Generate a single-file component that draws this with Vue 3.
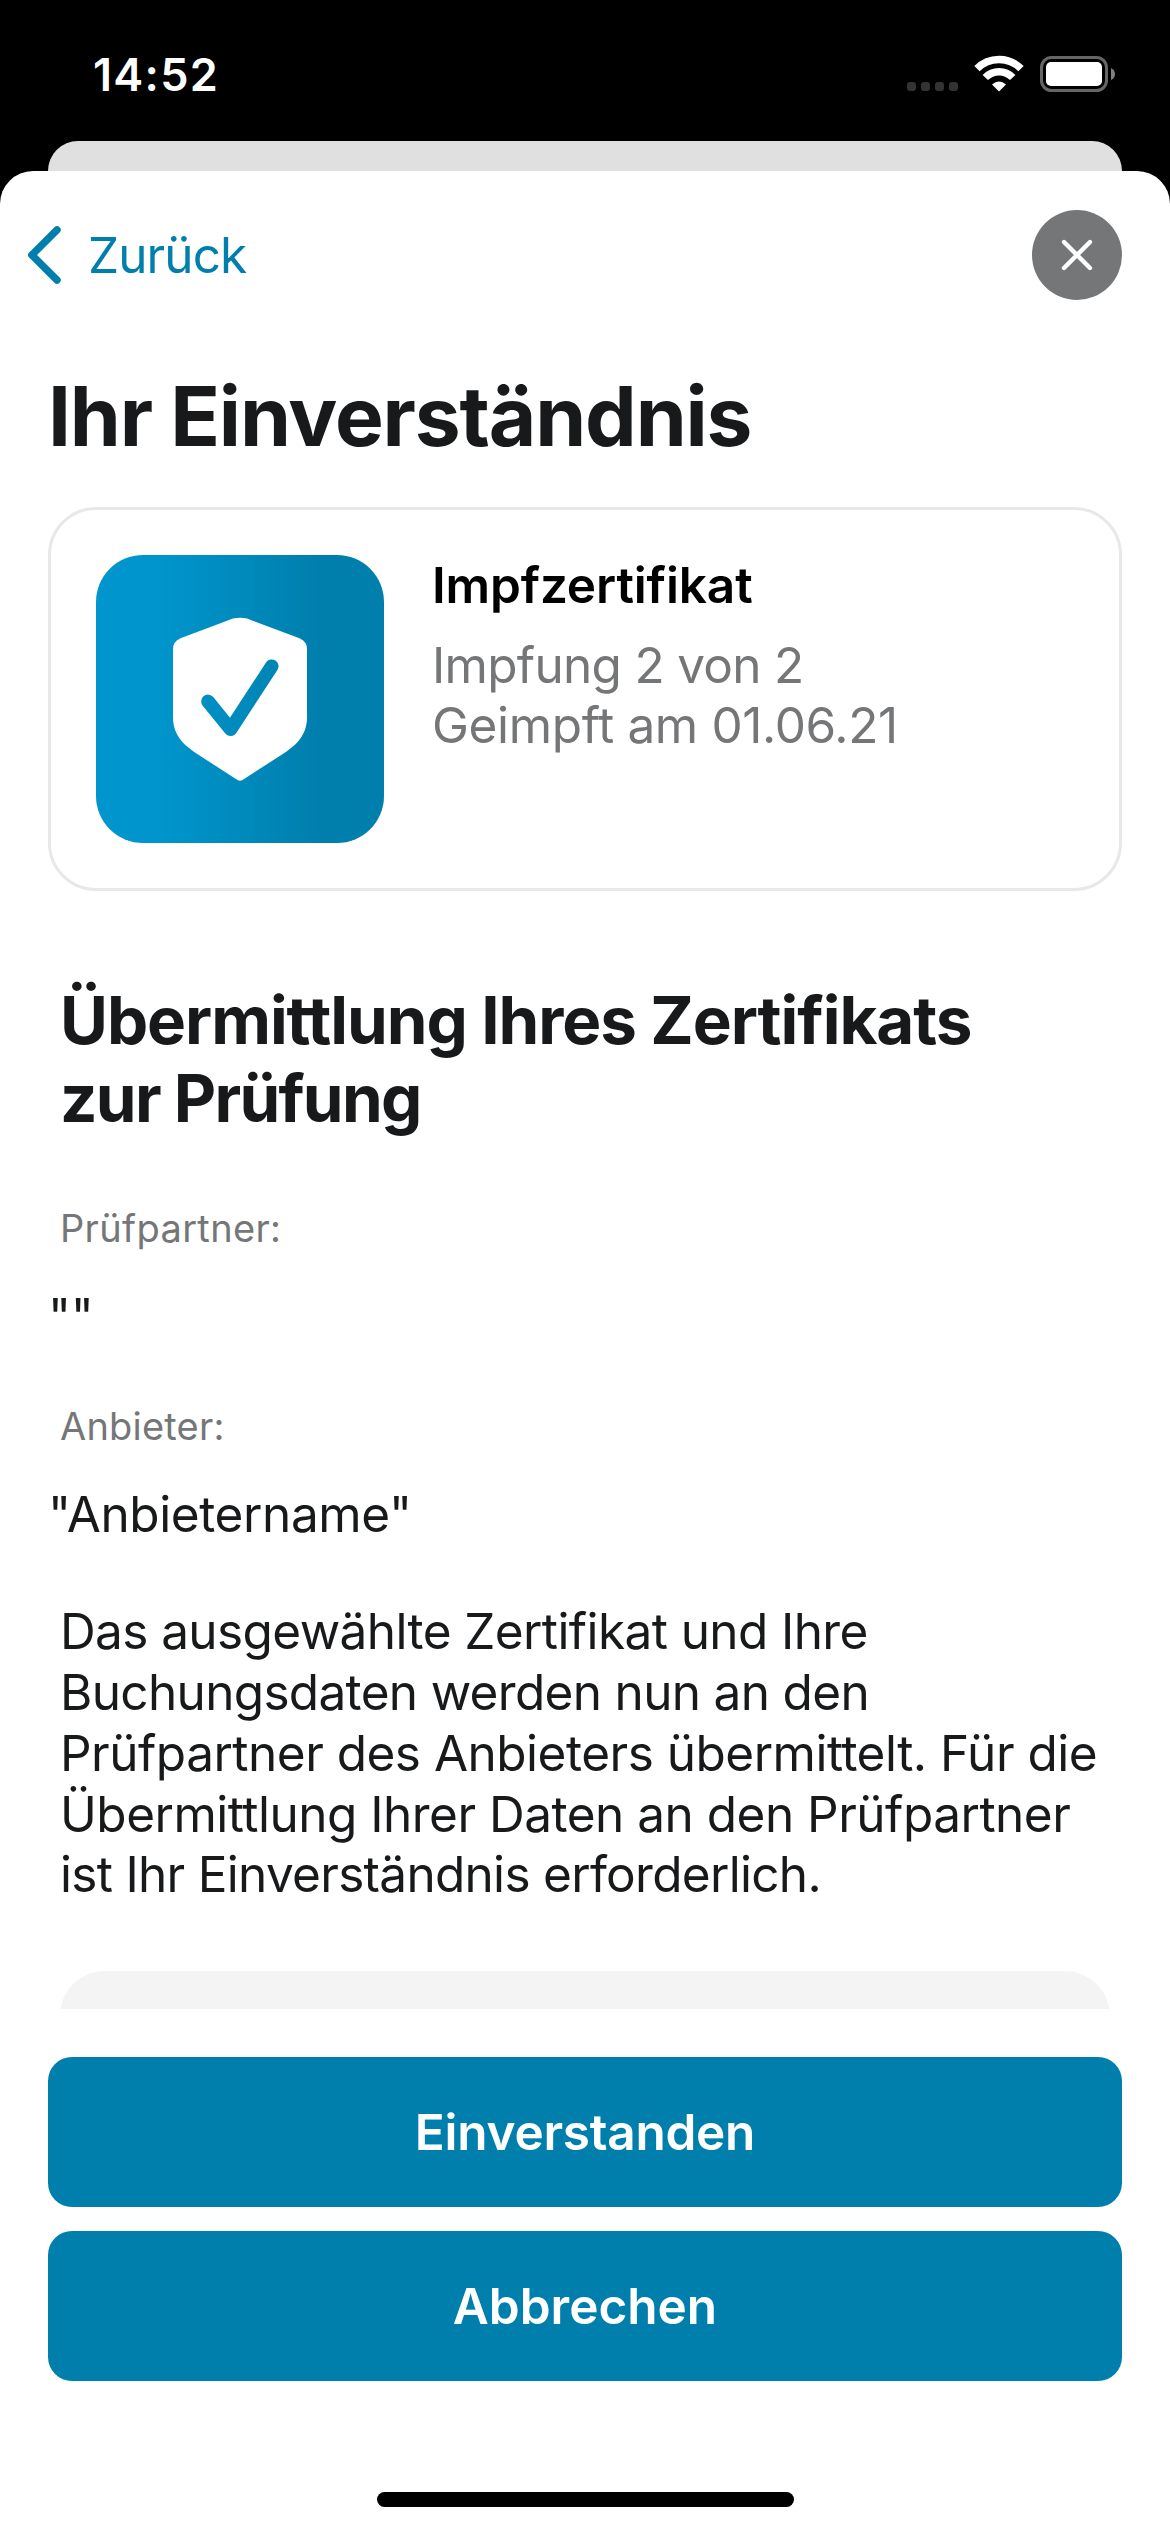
<script setup>
const certificate = {
  name: 'Impfzertifikat',
  dose: 'Impfung 2 von 2',
  date: 'Geimpft am 01.06.21'
}

const consentLines = [
  'Das ausgewählte Zertifikat und Ihre',
  'Buchungsdaten werden nun an den',
  'Prüfpartner des Anbieters übermittelt. Für die',
  'Übermittlung Ihrer Daten an den Prüfpartner',
  'ist Ihr Einverständnis erforderlich.'
]
</script>

<template>
  <div class="screen">
    <header class="status">
      <span class="time">14:52</span>
      <div class="indicators">
        <div class="dots"><i v-for="n in 4" :key="n"></i></div>
        <svg class="wifi" width="50" height="38" viewBox="0 0 50 38">
          <g fill="none" stroke="#fff" stroke-width="7.5">
            <path d="M3 14.7 A31 31 0 0 1 47 14.7" />
            <path d="M11.3 23.5 A19 19 0 0 1 38.7 23.5" />
          </g>
          <path d="M18 30.600 Q25 24.200 32 30.600 L25 37.600z" fill="#fff" />
        </svg>
        <svg class="battery" width="76" height="36" viewBox="0 0 76 36">
          <rect x="1.5" y="1.5" width="65" height="33" rx="10" fill="none" stroke="#666" stroke-width="3" />
          <rect x="6" y="6" width="56" height="24" rx="5" fill="#fff" />
          <path d="M71 12 Q75 14 75 18 Q75 22 71 24z" fill="#808080" />
        </svg>
      </div>
    </header>
    <div class="behind"></div>

    <main class="sheet">
      <nav class="nav">
        <a class="back">
          <svg width="36" height="60" viewBox="0 0 36 60">
            <path d="M31 4.900 L5.800 30 L31 55.100" fill="none" stroke="#007fad" stroke-width="7.400" stroke-linecap="round" stroke-linejoin="round" />
          </svg>
          <span>Zurück</span>
        </a>
        <button class="close" aria-label="Schließen">
          <svg width="90" height="90" viewBox="0 0 90 90">
            <path d="M32 32 L58 58 M58 32 L32 58" stroke="#fff" stroke-width="4.4" stroke-linecap="round" />
          </svg>
        </button>
      </nav>

      <h1>Ihr Einverständnis</h1>

      <section class="card">
        <div class="badge">
          <svg width="160" height="190" viewBox="0 0 160 190">
            <mask id="check">
              <rect width="160" height="190" fill="#fff" />
              <path d="M48 96.4 L70.6 124.2 L111.7 61.2" fill="none" stroke="#000" stroke-width="13.6" stroke-linecap="round" stroke-linejoin="round" />
            </mask>
            <path mask="url(#check)" fill="#fff" d="M73 13.6 Q80 12 87 13.6 L139.5 33.2 Q147 36.5 147 44 V112 C147 132 134 141.5 122 149.5 L82.5 175 Q80 176.6 77.5 175 L38 149.5 C26 141.5 13 132 13 112 V44 Q13 36.5 20.5 33.2z" />
          </svg>
        </div>
        <div class="info">
          <strong>{{ certificate.name }}</strong>
          <p>
            <span class="dose">{{ certificate.dose }}</span>
            <span class="date">{{ certificate.date }}</span>
          </p>
        </div>
      </section>

      <h2>
        <span class="first">Übermittlung Ihres Zertifikats</span>
        <span class="second">zur Prüfung</span>
      </h2>

      <dl>
        <dt class="partner">Prüfpartner:</dt>
        <dd>""</dd>
        <dt>Anbieter:</dt>
        <dd>"Anbietername"</dd>
      </dl>

      <p class="consent">
        <span v-for="line in consentLines" :key="line">{{ line }}</span>
      </p>
      <div class="clip"><div class="notice"></div></div>

      <footer>
        <button class="action agree">Einverstanden</button>
        <button class="action">Abbrechen</button>
      </footer>
      <div class="home"></div>
    </main>
  </div>
</template>

<style>
body {
  margin: 0;
  background: #000;
}
</style>

<style scoped>
.screen {
  width: 1170px;
  height: 2532px;
  display: flex;
  flex-direction: column;
  overflow: hidden;
  background: #000;
  color: #17191a;
  font-family: Inter, "Liberation Sans", sans-serif;
  font-size: 49.5px;
  white-space: nowrap;
}
h1, h2, p, dl, dd, button {
  margin: 0;
  padding: 0;
}
button {
  border: 0;
  font-family: inherit;
}
svg {
  display: block;
}
.status {
  height: 141px;
  box-sizing: border-box;
  padding: 45px 54px 0 93px;
  display: flex;
  justify-content: space-between;
  align-items: flex-start;
  color: #fff;
}
.time {
  font-size: 45px;
  font-weight: 600;
  line-height: 60px;
  letter-spacing: 1.3px;
}
.indicators {
  display: flex;
  align-items: flex-start;
  padding-top: 9px;
}
.dots {
  display: flex;
  gap: 5px;
  margin: 28px 16px 0 0;
}
.dots i {
  width: 9px;
  height: 9px;
  border-radius: 3px;
  background: #333;
}
.battery {
  margin: 2px 0 0 16px;
}
.behind {
  height: 30px;
  margin: 0 48px;
  border-radius: 30px 30px 0 0;
  background: #e0e0e0;
}
.sheet {
  flex: 1;
  display: flex;
  flex-direction: column;
  border-radius: 33px 33px 0 0;
  background: #fff;
  font-feature-settings: "calt" 0, "dlig" 0;
  font-variant-ligatures: none;
}
.nav {
  height: 168px;
  padding: 0 48px 0 26px;
  display: flex;
  align-items: center;
  justify-content: space-between;
}
.back {
  display: flex;
  align-items: center;
  gap: 26px;
  color: #007fad;
  line-height: 60px;
  letter-spacing: -0.9px;
}
.close {
  width: 90px;
  height: 90px;
  border-radius: 50%;
  background: #757678;
}
h1 {
  margin: 28px 48px 40px;
  font-size: 82px;
  line-height: 100px;
  font-weight: 700;
  letter-spacing: -1.17px;
}
.card {
  margin: 0 48px;
  padding: 45px;
  border: 3px solid #e8e8e8;
  border-radius: 48px;
  display: flex;
  gap: 48px;
}
.badge {
  width: 288px;
  height: 288px;
  box-sizing: border-box;
  padding: 50px 64px;
  border-radius: 47px;
  background: linear-gradient(90deg, #0095cc 22%, #007fad 77%);
}
.info strong {
  display: block;
  color: #000;
  font-weight: 600;
  line-height: 60px;
  letter-spacing: -0.13px;
}
.info p {
  margin-top: 19.5px;
  color: #757678;
  line-height: 60.9px;
}
.info span,
h2 span,
.consent span {
  display: block;
}
.dose {
  letter-spacing: -0.7px;
}
.date {
  letter-spacing: -0.35px;
}
h2 {
  margin: 91px 60px 67px;
  font-size: 65.5px;
  line-height: 78px;
  font-weight: 700;
}
.first {
  letter-spacing: -1.06px;
}
.second {
  letter-spacing: -1.7px;
}
dt {
  margin-left: 60px;
  color: #757678;
  font-size: 38px;
  line-height: 46px;
  letter-spacing: 0.2px;
}
.partner {
  letter-spacing: 0.34px;
}
dd {
  margin: 35px 48px 57px;
  line-height: 60px;
  letter-spacing: -0.4px;
}
.consent {
  margin: 0 60px;
  line-height: 60.86px;
  letter-spacing: -0.5px;
}
.consent span:first-child {
  letter-spacing: -0.6px;
}
.consent span:nth-child(2) {
  letter-spacing: -0.67px;
}
.consent span:last-child {
  letter-spacing: -0.7px;
}
.clip {
  height: 38px;
  margin: 66px 60px 0;
  overflow: hidden;
}
.notice {
  height: 90px;
  border-radius: 45px;
  background: #f4f4f4;
}
footer {
  display: flex;
  flex-direction: column;
  gap: 24px;
  padding: 48px 48px 111px;
}
.action {
  height: 150px;
  border-radius: 24px;
  background: #007fad;
  color: #fff;
  font-size: 49.5px;
  font-weight: 600;
}
.agree {
  letter-spacing: -0.25px;
}
.home {
  width: 417px;
  height: 15px;
  margin: 0 auto;
  border-radius: 8px;
  background: #000;
}
</style>
